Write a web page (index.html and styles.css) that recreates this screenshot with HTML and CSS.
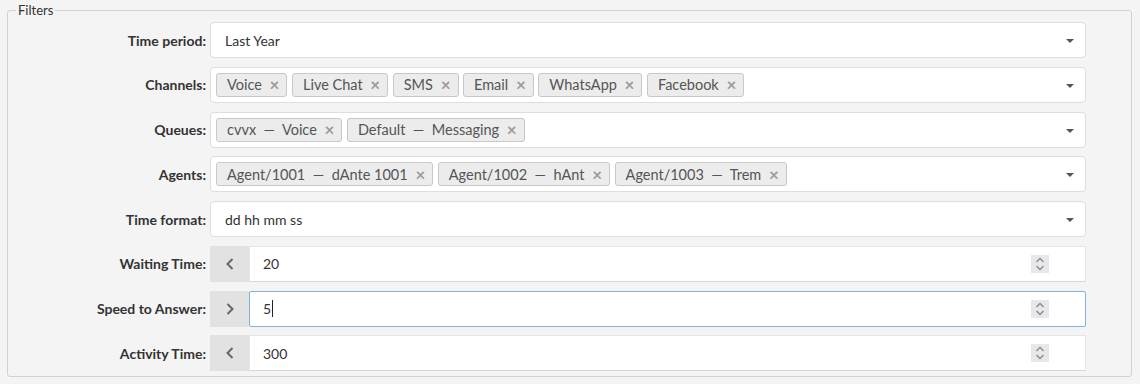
FILE: index.html
```html
<!DOCTYPE html>
<html lang="en">
<head>
    <meta charset="UTF-8">
    <title>Filters</title>
    <link rel="stylesheet" href="styles.css">
</head>
<body>
    <fieldset class="filtros">
        <legend>Filters</legend>

        <label>Time period:</label>
        <div class="caja select">
            <span>Last Year</span>
            <span class="flecha"></span>
        </div>

        <label>Channels:</label>
        <div class="caja select tags">
            <span class="tag">Voice <i>&times;</i></span>
            <span class="tag">Live Chat <i>&times;</i></span>
            <span class="tag">SMS <i>&times;</i></span>
            <span class="tag">Email <i>&times;</i></span>
            <span class="tag">WhatsApp <i>&times;</i></span>
            <span class="tag">Facebook <i>&times;</i></span>
            <span class="flecha"></span>
        </div>

        <label>Queues:</label>
        <div class="caja select tags">
            <span class="tag">cvvx &nbsp;&mdash;&nbsp; Voice <i>&times;</i></span>
            <span class="tag">Default &nbsp;&mdash;&nbsp; Messaging <i>&times;</i></span>
            <span class="flecha"></span>
        </div>

        <label>Agents:</label>
        <div class="caja select tags">
            <span class="tag">Agent/1001 &nbsp;&mdash;&nbsp; dAnte 1001 <i>&times;</i></span>
            <span class="tag">Agent/1002 &nbsp;&mdash;&nbsp; hAnt <i>&times;</i></span>
            <span class="tag">Agent/1003 &nbsp;&mdash;&nbsp; Trem <i>&times;</i></span>
            <span class="flecha"></span>
        </div>

        <label>Time format:</label>
        <div class="caja select">
            <span>dd hh mm ss</span>
            <span class="flecha"></span>
        </div>

        <label>Waiting Time:</label>
        <div class="numero">
            <span class="addon"><svg width="8" height="12" viewBox="0 0 8 12"><path d="M6.5 1 L1.5 6 L6.5 11" fill="none" stroke="#666" stroke-width="2"/></svg></span>
            <div class="campo">
                <span>20</span>
                <span class="spin"><svg width="18" height="18" viewBox="0 0 18 18"><path d="M5.5 7 L9 3.5 L12.5 7 M5.5 11 L9 14.5 L12.5 11" fill="none" stroke="#8c8c8c" stroke-width="1.4"/></svg></span>
            </div>
        </div>

        <label>Speed to Answer:</label>
        <div class="numero">
            <span class="addon"><svg width="8" height="12" viewBox="0 0 8 12"><path d="M1.5 1 L6.5 6 L1.5 11" fill="none" stroke="#666" stroke-width="2"/></svg></span>
            <div class="campo foco">
                <span>5<span class="cursor"></span></span>
                <span class="spin"><svg width="18" height="18" viewBox="0 0 18 18"><path d="M5.5 7 L9 3.5 L12.5 7 M5.5 11 L9 14.5 L12.5 11" fill="none" stroke="#8c8c8c" stroke-width="1.4"/></svg></span>
            </div>
        </div>

        <label>Activity Time:</label>
        <div class="numero">
            <span class="addon"><svg width="8" height="12" viewBox="0 0 8 12"><path d="M6.5 1 L1.5 6 L6.5 11" fill="none" stroke="#666" stroke-width="2"/></svg></span>
            <div class="campo">
                <span>300</span>
                <span class="spin"><svg width="18" height="18" viewBox="0 0 18 18"><path d="M5.5 7 L9 3.5 L12.5 7 M5.5 11 L9 14.5 L12.5 11" fill="none" stroke="#8c8c8c" stroke-width="1.4"/></svg></span>
            </div>
        </div>
    </fieldset>
</body>
</html>
```

FILE: styles.css
```css
body {
    margin: 0;
    padding: 2px 8px 0 7px;
    background-color: #f4f4f4;
    font-family: Lato, "Open Sans", sans-serif;
    font-size: 14px;
    color: #333;
}
.filtros {
    margin: 0;
    padding: 4px 45px 5px 0;
    border: 1px solid #d2d2d2;
    border-radius: 3px;
    display: grid;
    grid-template-columns: 198px 1fr;
    column-gap: 4px;
    row-gap: 8.75px;
    align-items: center;
}
legend {
    margin-left: 8px;
    padding: 0 2px;
    font-size: 13px;
    color: #333;
    line-height: 16px;
}
label {
    text-align: right;
    font-weight: bold;
    color: #333;
}
.caja {
    height: 36px;
    box-sizing: border-box;
    background: white;
    border: 1px solid #dedede;
    border-radius: 4px;
    display: flex;
    align-items: center;
    padding: 0 14px;
    position: relative;
}
.tags {
    padding: 0 5px;
    gap: 4.5px;
}
.tag {
    height: 24px;
    box-sizing: border-box;
    background: #ececec;
    border: 1px solid #c8c8c8;
    border-radius: 3px;
    padding: 0 7px 0 10px;
    display: flex;
    align-items: center;
    color: #555;
    font-size: 14.5px;
    white-space: pre;
}
.tag i {
    font-style: normal;
    font-weight: bold;
    color: #9a9a9a;
    font-size: 17px;
    margin-left: 4px;
}
.flecha {
    position: absolute;
    right: 11px;
    top: 16px;
    width: 0;
    height: 0;
    border-left: 4px solid transparent;
    border-right: 4px solid transparent;
    border-top: 4px solid #555;
}
.numero {
    height: 36px;
    display: flex;
}
.addon {
    width: 39px;
    background: #e2e2e2;
    display: flex;
    align-items: center;
    justify-content: center;
}
.campo {
    flex: 1;
    background: white;
    border: 1px solid #e6e6e6;
    border-bottom-color: #d6d6d6;
    display: flex;
    align-items: center;
    justify-content: space-between;
    padding: 0 36px 0 13px;
}
.campo.foco {
    border: 1px solid #80b3da;
    border-radius: 2px;
}
.cursor {
    display: inline-block;
    width: 1px;
    height: 17px;
    background: #222;
    vertical-align: -3px;
    margin-left: 1px;
}
.spin {
    width: 18px;
    height: 18px;
    background: #e8e8ec;
    display: flex;
}
```
